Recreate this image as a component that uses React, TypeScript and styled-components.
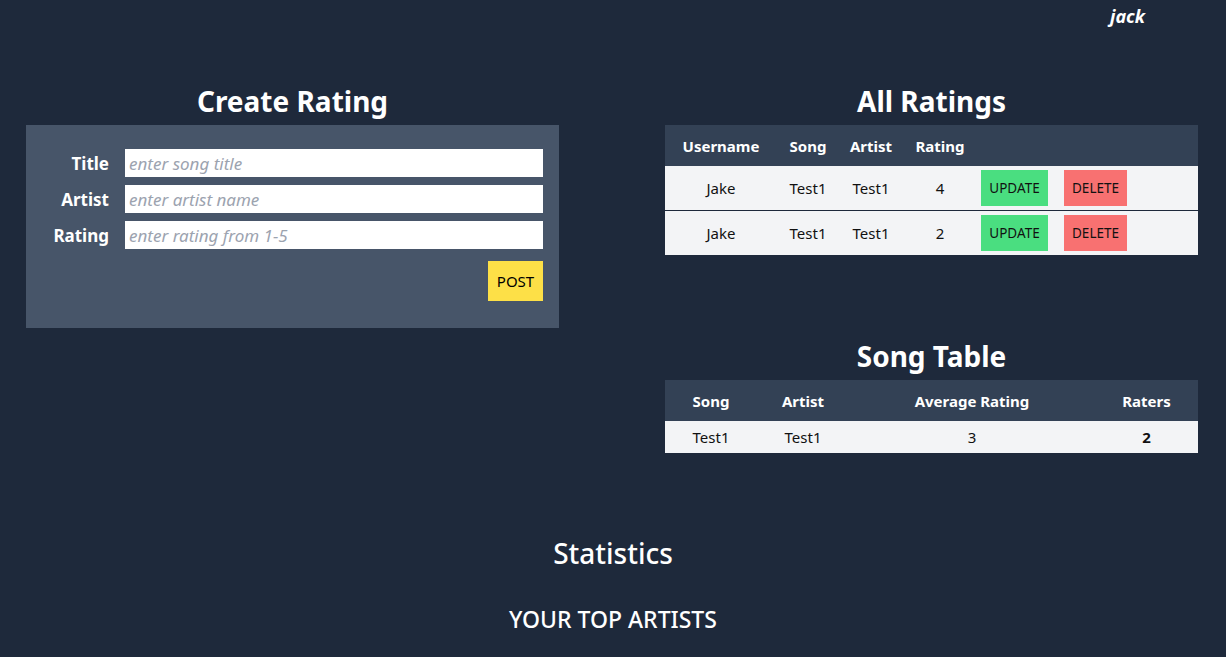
import * as React from "react";
import styled, { createGlobalStyle } from "styled-components";

const GlobalStyle = createGlobalStyle`
	html, body {
		margin: 0;
		padding: 0;
		background: #1e293b;
		font-family: "Noto Sans", "Open Sans", sans-serif;
	}
	* {
		box-sizing: border-box;
	}
`;

const Page = styled.div`
	min-height: 657px;
	background: #1e293b;
	color: #fff;
	padding-bottom: 24px;
`;

const TopBar = styled.div`
	display: flex;
	justify-content: flex-end;
	height: 35px;
	padding: 4px 81px 0 0;
`;

const UserName = styled.span`
	font-size: 18px;
	font-weight: 700;
	font-style: italic;
	color: #fff;
`;

const Columns = styled.div`
	display: grid;
	grid-template-columns: 533px 533px;
	column-gap: 106px;
	padding: 46px 28px 0 26px;
`;

const Section = styled.section<{ $gap?: number }>`
	display: flex;
	flex-direction: column;
	margin-bottom: ${(p) => p.$gap ?? 0}px;
`;

const Heading = styled.h2`
	font-size: 28px;
	line-height: 40px;
	font-weight: 700;
	text-align: center;
	margin: 0 0 4px;
`;

const FormCard = styled.form`
	background: #475569;
	padding: 24px 16px 27px;
	display: flex;
	flex-direction: column;
	gap: 8px;
`;

const FieldRow = styled.label`
	display: grid;
	grid-template-columns: 67px 1fr;
	column-gap: 16px;
	align-items: center;
`;

const Label = styled.span`
	font-size: 17px;
	font-weight: 700;
	text-align: right;
	color: #fff;
`;

const Input = styled.input`
	height: 28px;
	border: none;
	outline: none;
	padding: 0 4px;
	font-family: inherit;
	font-size: 17px;
	color: #111;
	background: #fff;
	&::placeholder {
		color: #9ca3af;
		font-style: italic;
	}
`;

const Actions = styled.div`
	display: flex;
	justify-content: flex-end;
	margin-top: 4px;
`;

const PostButton = styled.button`
	background: #fde047;
	border: none;
	height: 40px;
	width: 55px;
	font-family: inherit;
	font-size: 15px;
	color: #000;
	cursor: pointer;
`;

const Table = styled.table`
	width: 533px;
	border-collapse: separate;
	border-spacing: 0;
	table-layout: fixed;
	font-size: 15px;
`;

const HeadRow = styled.tr`
	background: #334155;
`;

const Th = styled.th`
	height: 41px;
	font-weight: 700;
	color: #fff;
	text-align: center;
	padding: 0;
`;

const BodyRow = styled.tr<{ $h: number }>`
	background: #f3f4f6;
	& > td {
		height: ${(p) => p.$h}px;
	}
	& + & > td {
		border-top: 1px solid #1e293b;
		height: ${(p) => p.$h + 1}px;
	}
`;

const Td = styled.td<{ $bold?: boolean }>`
	color: #111;
	text-align: center;
	padding: 0;
	font-weight: ${(p) => (p.$bold ? 700 : 400)};
`;

const ButtonCell = styled.td`
	padding: 0 0 0 4px;
`;

const ButtonGroup = styled.div`
	display: flex;
	gap: 16px;
`;

const RowButton = styled.button<{ $kind: "update" | "delete" }>`
	background: ${(p) => (p.$kind === "update" ? "#4ade80" : "#f87171")};
	border: none;
	height: 36px;
	width: ${(p) => (p.$kind === "update" ? 67 : 63)}px;
	padding: 0;
	font-family: inherit;
	font-size: 13.5px;
	color: #111;
	cursor: pointer;
`;

const Stats = styled.section`
	display: flex;
	flex-direction: column;
	align-items: center;
	padding-top: 80px;
`;

const StatsTitle = styled.h2`
	font-size: 28px;
	font-weight: 500;
	line-height: 40px;
	margin: 0;
`;

const SubTitle = styled.h3`
	font-size: 23px;
	font-weight: 500;
	line-height: 32px;
	margin: 30px 0 0;
`;

const ratings = [
	{ user: "Jake", song: "Test1", artist: "Test1", rating: 4 },
	{ user: "Jake", song: "Test1", artist: "Test1", rating: 2 },
];

const songs = [{ song: "Test1", artist: "Test1", avg: 3, raters: 2 }];

const App = () => {
	return (
		<Page>
			<GlobalStyle />
			<TopBar>
				<UserName>jack</UserName>
			</TopBar>
			<Columns>
				<Section>
					<Heading>Create Rating</Heading>
					<FormCard onSubmit={(e) => e.preventDefault()}>
						<FieldRow>
							<Label>Title</Label>
							<Input placeholder="enter song title" />
						</FieldRow>
						<FieldRow>
							<Label>Artist</Label>
							<Input placeholder="enter artist name" />
						</FieldRow>
						<FieldRow>
							<Label>Rating</Label>
							<Input placeholder="enter rating from 1-5" />
						</FieldRow>
						<Actions>
							<PostButton type="submit">POST</PostButton>
						</Actions>
					</FormCard>
				</Section>
				<div>
					<Section $gap={81}>
						<Heading>All Ratings</Heading>
						<Table>
							<colgroup>
								<col style={{ width: 112 }} />
								<col style={{ width: 62 }} />
								<col style={{ width: 64 }} />
								<col style={{ width: 74 }} />
								<col />
							</colgroup>
							<thead>
								<HeadRow>
									<Th>Username</Th>
									<Th>Song</Th>
									<Th>Artist</Th>
									<Th>Rating</Th>
									<Th />
								</HeadRow>
							</thead>
							<tbody>
								{ratings.map((r, i) => (
									<BodyRow key={i} $h={44}>
										<Td>{r.user}</Td>
										<Td>{r.song}</Td>
										<Td>{r.artist}</Td>
										<Td>{r.rating}</Td>
										<ButtonCell>
											<ButtonGroup>
												<RowButton $kind="update">UPDATE</RowButton>
												<RowButton $kind="delete">DELETE</RowButton>
											</ButtonGroup>
										</ButtonCell>
									</BodyRow>
								))}
							</tbody>
						</Table>
					</Section>
					<Section>
						<Heading>Song Table</Heading>
						<Table>
							<colgroup>
								<col style={{ width: 92 }} />
								<col style={{ width: 92 }} />
								<col style={{ width: 246 }} />
								<col />
							</colgroup>
							<thead>
								<HeadRow>
									<Th>Song</Th>
									<Th>Artist</Th>
									<Th>Average Rating</Th>
									<Th>Raters</Th>
								</HeadRow>
							</thead>
							<tbody>
								{songs.map((s, i) => (
									<BodyRow key={i} $h={32}>
										<Td>{s.song}</Td>
										<Td>{s.artist}</Td>
										<Td>{s.avg}</Td>
										<Td $bold>{s.raters}</Td>
									</BodyRow>
								))}
							</tbody>
						</Table>
					</Section>
				</div>
			</Columns>
			<Stats>
				<StatsTitle>Statistics</StatsTitle>
				<SubTitle>YOUR TOP ARTISTS</SubTitle>
			</Stats>
		</Page>
	);
};

export default App;
